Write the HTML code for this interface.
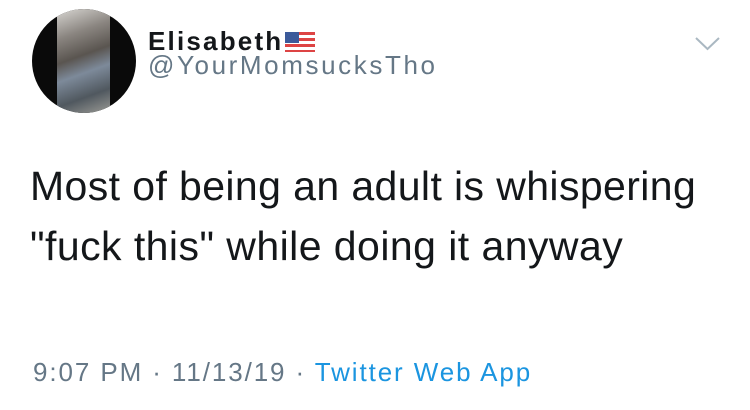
<!DOCTYPE html>
<html><head><style>
html,body{margin:0;padding:0;background:#fff;width:750px;height:410px;overflow:hidden;position:relative;font-family:"Liberation Sans",sans-serif}
.av{position:absolute;left:32px;top:9px;width:104px;height:104px;border-radius:50%;background:#0a0a0a;overflow:hidden}
.ph{position:absolute;left:25px;top:0;width:53px;height:104px;background:linear-gradient(160deg,#d8d6d2 0%,#8a8580 25%,#5a5550 45%,#7d8a9a 60%,#50585f 80%,#9a9a95 100%)}
.t{position:absolute;white-space:nowrap}
</style></head><body>
<div class="av"><div class="ph"></div></div>
<div class="t" style="left:148px;top:26px;font-size:26px;font-weight:bold;color:#14171a;letter-spacing:2.2px">Elisabeth<span style="display:inline-block;width:30px;height:20px;margin-left:2px;vertical-align:-2px;background:repeating-linear-gradient(#d44 0 3px,#fff 3px 6px);position:relative"><span style="position:absolute;left:0;top:0;width:14px;height:11px;background:#3b5a9a"></span></span></div>
<div class="t" style="left:148px;top:50px;font-size:26px;color:#657786;letter-spacing:2.6px">@YourMomsucksTho</div>
<svg style="position:absolute;left:694px;top:36px" width="27" height="16"><path d="M2 2 L13.5 13 L25 2" fill="none" stroke="#aab8c2" stroke-width="2"/></svg>
<div class="t" style="left:30px;top:163px;font-size:41px;color:#14171a;letter-spacing:0.4px">Most of being an adult is whispering</div>
<div class="t" style="left:30px;top:223px;font-size:41px;color:#14171a;letter-spacing:0.45px">"fuck this" while doing it anyway</div>
<div class="t" style="left:33px;top:357px;font-size:26px;color:#657786;letter-spacing:1.9px">9:07 PM · 11/13/19 · <span style="color:#1b95e0">Twitter Web App</span></div>
</body></html>
